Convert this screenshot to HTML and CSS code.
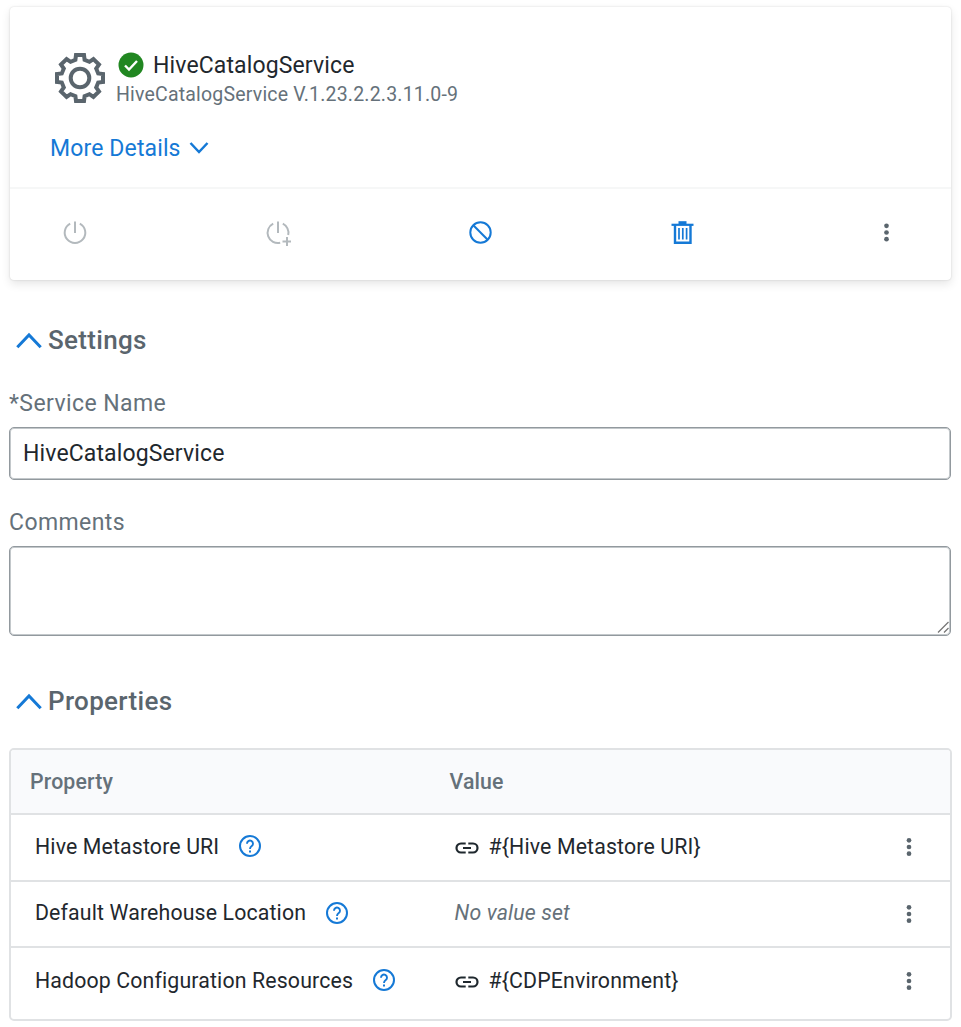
FILE: index.html
```html
<!DOCTYPE html>
<html lang="en">
<head>
<meta charset="utf-8">
<title>HiveCatalogService</title>
<link rel="stylesheet" href="styles.css">
</head>
<body>
<svg class="defs" width="0" height="0">
  <symbol id="dots" viewBox="0 0 6 20"><circle cx="3" cy="3.300" r="2.350"/><circle cx="3" cy="10" r="2.350"/><circle cx="3" cy="16.700" r="2.350"/></symbol>
  <symbol id="up" viewBox="0 0 26 17"><path d="M1.300 15.200 13 3l11.700 12.200" fill="none" stroke="currentColor" stroke-width="3"/></symbol>
  <symbol id="help" viewBox="0 0 24 24"><circle cx="12" cy="12" r="10" fill="none" stroke="currentColor" stroke-width="2"/><path d="M9 9.700a3 3 0 1 1 4.800 2.300C12.600 12.900 12 13.300 12 14.900" fill="none" stroke="currentColor" stroke-width="1.900"/><path d="M11 16.500h2v1.900h-2z"/></symbol>
  <symbol id="link" viewBox="0 0 24 14"><path d="M10.700 2.500H6a4.500 4.500 0 0 0 0 9h4.700M13.300 2.500H18a4.500 4.500 0 0 1 0 9h-4.700M8 7h8" fill="none" stroke="currentColor" stroke-width="2.200"/></symbol>
</svg>
<main class="page">
  <section class="card">
    <div class="summary">
      <div class="identity">
        <svg class="gear" viewBox="-26 -26 52 52"><path d="M-4-23H4L4.600-18.200 9.400-16.200 13.400-19 19-13.400 16.200-9.400 18.200-4.600 23-4V4L18.200 4.600 16.200 9.400 19 13.400 13.400 19 9.400 16.200 4.600 18.200 4 23H-4L-4.600 18.200-9.400 16.200-13.400 19-19 13.400-16.200 9.400-18.200 4.600-23 4V-4L-18.200-4.600-16.200-9.400-19-13.400-13.400-19-9.400-16.200-4.600-18.200Z"/><circle r="9.300"/></svg>
        <div class="names">
          <div class="title"><svg class="check" viewBox="0 0 26 26"><circle cx="13" cy="13" r="12.500" fill="#218721"/><path d="m7 13.500 4 4 8-8.500" fill="none" stroke="#fff" stroke-width="2.400"/></svg><span>HiveCatalogService</span></div>
          <div class="version">HiveCatalogService V.1.23.2.2.3.11.0-9</div>
        </div>
      </div>
      <a class="more"><span>More Details</span><svg class="down" viewBox="0 0 20 13"><path d="m1.500 2 8.500 9 8.500-9" fill="none" stroke="currentColor" stroke-width="2.500"/></svg></a>
    </div>
    <div class="actions">
      <svg class="icon off" viewBox="0 0 26 26"><path d="M13 1.500v11.500M8.200 3.600a10.300 10.300 0 1 0 9.600 0"/></svg>
      <svg class="icon off" viewBox="0 0 26 26"><path d="M13 1.500v11.500M8.200 3.600a10.300 10.300 0 0 0 7 19.200M17.800 3.600a10.300 10.300 0 0 1 5.400 11.400M22 17v9M17.500 21.500h8.500"/></svg>
      <svg class="icon" viewBox="0 0 26 26"><circle cx="12.500" cy="12.500" r="10.200"/><path d="m5.300 5.300 14.400 14.400"/></svg>
      <svg class="icon" viewBox="0.500 0.500 26 26"><path d="M2 5.300h22" stroke-width="2.200"/><path d="M9 3.200h8" stroke-width="3"/><path d="M5.500 5v18.300h15.500V5" stroke-width="2.400"/><path d="M9.500 8.500V20M13.300 8.500V20M17.100 8.500V20" stroke-width="1.700"/></svg>
      <svg class="icon menu"><use href="#dots" x="10.500" y="2.500" width="6" height="20"/></svg>
    </div>
  </section>

  <h2 class="heading settings"><svg class="up"><use href="#up"/></svg><span>Settings</span></h2>
  <label class="label" for="name">*Service Name</label>
  <input class="field" id="name" type="text" value="HiveCatalogService">
  <label class="label second" for="comments">Comments</label>
  <div class="area-wrap">
    <textarea class="field area" id="comments"></textarea>
    <svg class="grip" viewBox="0 0 12 12"><path d="M1 11.500 11.500 1M7 11.500l4.500-4.500"/></svg>
  </div>

  <h2 class="heading properties"><svg class="up"><use href="#up"/></svg><span>Properties</span></h2>
  <div class="table">
    <div class="row head"><div>Property</div><div>Value</div></div>
    <div class="row"><div class="cell"><span>Hive Metastore URI</span><svg class="help"><use href="#help"/></svg></div><div class="cell"><svg class="link"><use href="#link"/></svg><span>#{Hive Metastore URI}</span></div><svg class="dots"><use href="#dots"/></svg></div>
    <div class="row"><div class="cell"><span>Default Warehouse Location</span><svg class="help"><use href="#help"/></svg></div><div class="cell empty">No value set</div><svg class="dots"><use href="#dots"/></svg></div>
    <div class="row last"><div class="cell"><span>Hadoop Configuration Resources</span><svg class="help"><use href="#help"/></svg></div><div class="cell"><svg class="link"><use href="#link"/></svg><span>#{CDPEnvironment}</span></div><svg class="dots"><use href="#dots"/></svg></div>
  </div>
</main>
</body>
</html>
```
FILE: styles.css
```css
* { box-sizing: border-box; }
body { margin: 0; background: #fff; color: #1f282e; font-family: Roboto, sans-serif; font-size: 23px; letter-spacing: 0.13px; }
svg { display: block; flex: none; }
.defs { position: absolute; }
.page { display: flex; flex-direction: column; padding: 7px 9px 0; }
.card { height: 273px; margin: 0 1px; border-radius: 4px; box-shadow: 0 0 2px rgba(0,0,0,.16), 0 4px 10px rgba(0,0,0,.1); }
.summary { height: 182px; padding: 42px 40px 0; border-bottom: 2px solid #f6f7f7; }
.identity { display: flex; gap: 10.5px; padding-left: 3.5px; height: 61px; }
.gear { width: 52px; height: 52px; margin-top: 3px; fill: none; stroke: #5a656d; stroke-width: 4; }
.title { display: flex; align-items: center; gap: 9px; height: 31px; padding-left: 2px; }
.title span { padding-top: 2px; }
.title .check { width: 26px; height: 26px; }
.version { font-size: 19.5px; line-height: 30px; letter-spacing: 0.19px; color: #65717a; }
.more { display: inline-flex; align-items: center; gap: 8px; margin-top: 22px; height: 30px; color: #1579d6; }
.more span { padding-top: 2px; }
.down { width: 20px; height: 13px; }
.actions { display: flex; justify-content: space-between; align-items: center; height: 87px; padding: 0 52px; }
.icon { width: 26px; height: 26px; fill: none; stroke: #1579d6; stroke-width: 2; }
.icon.off { stroke: #b3b9bd; }
.icon.menu { fill: #5a656d; stroke: none; }
.heading { display: flex; align-items: center; gap: 6px; margin: 0; padding-left: 7px; height: 32px; font-size: 26px; font-weight: 500; letter-spacing: 0.32px; color: #5a656d; }
.settings { margin-top: 44px; }
.properties { margin-top: 49px; }
.up { width: 26px; height: 17px; color: #1579d6; }
.label { line-height: 28px; margin-top: 34px; letter-spacing: 0.42px; color: #65717a; }
.label.second { margin-top: 29px; }
.field { display: block; width: 942px; height: 53px; margin: 9px 0 0; padding: 0 14px 1px 13px; border: 1px solid #92999e; box-shadow: inset 0 0 0 1px #c3c8cb; border-radius: 5px; background: #fff; color: #1f282e; font: inherit; letter-spacing: inherit; outline: none; }
.area-wrap { position: relative; }
.area { height: 90px; resize: none; }
.grip { position: absolute; right: 3px; bottom: 3px; width: 12px; height: 12px; fill: none; stroke: #777; stroke-width: 1.3; }
.table { height: 273px; margin-top: 31px; border: 2px solid #e0e2e4; border-radius: 5px; overflow: hidden; font-size: 21.3px; letter-spacing: 0.14px; }
.row { display: grid; grid-template-columns: 419.5px 451.5px 6px; align-items: center; height: 66.5px; padding: 0 0 2px 24px; border-bottom: 2px solid #e0e2e4; }
.head { height: 65px; padding: 0 0 0 19px; background: #f9fafc; color: #65717a; font-weight: 500; }
.last { border-bottom: 0; }
.cell { display: flex; align-items: center; }
.help { width: 24px; height: 24px; margin-left: 19px; color: #1579d6; fill: #1579d6; }
.link { width: 24px; height: 14px; margin: 4px 10px 0 0; }
.empty { font-style: italic; color: #65717a; }
.dots { width: 6px; height: 20px; margin-top: 2px; fill: #5a656d; }
```
